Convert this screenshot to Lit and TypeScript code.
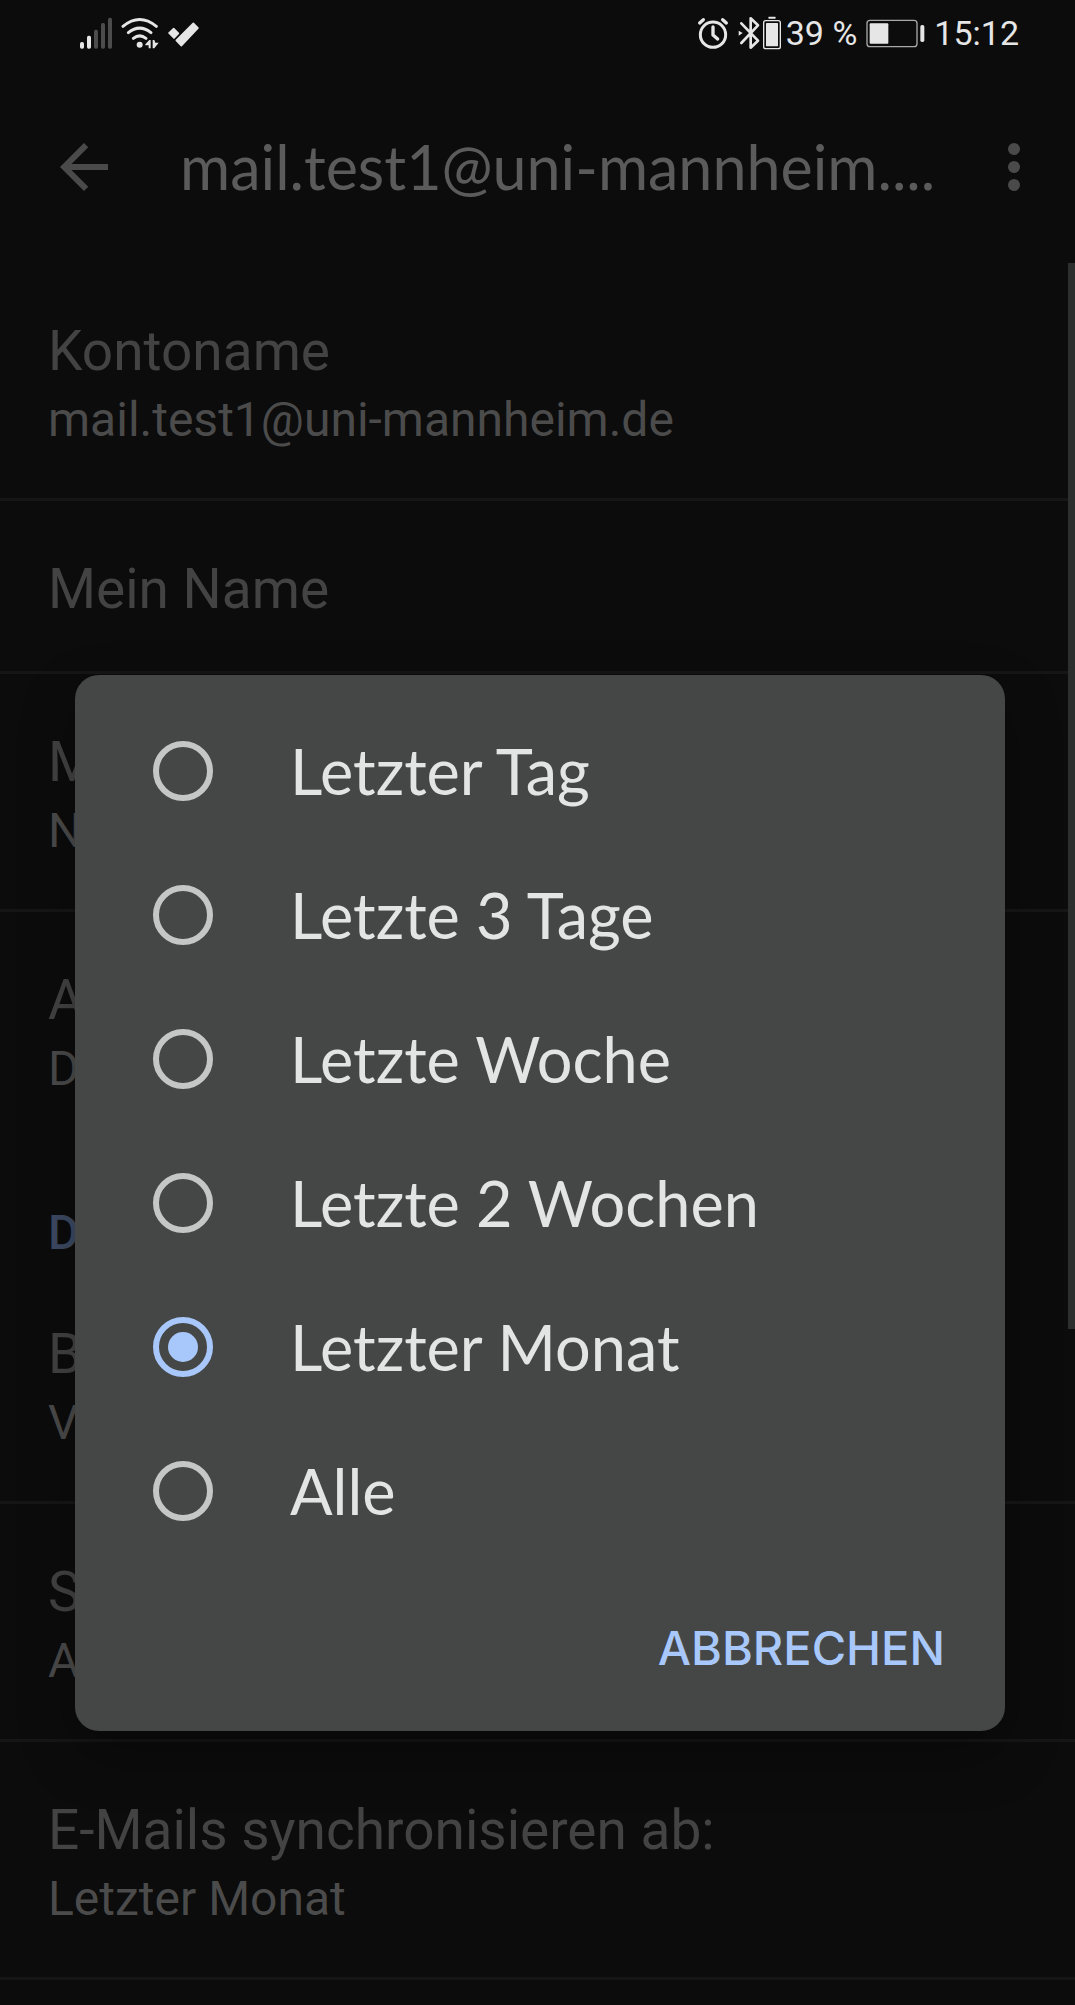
import { LitElement, html, css, svg, nothing } from "lit";
import { customElement, state } from "lit/decorators.js";

interface Row {
  kind: "row" | "heading";
  title: string;
  detail?: string;
  divider?: boolean;
}

const rows: Row[] = [
  { kind: "row", title: "Kontoname", detail: "mail.test1@uni-mannheim.de", divider: true },
  { kind: "row", title: "Mein Name", divider: true },
  { kind: "row", title: "M", detail: "N", divider: true },
  { kind: "row", title: "A", detail: "D" },
  { kind: "heading", title: "D" },
  { kind: "row", title: "B", detail: "V", divider: true },
  { kind: "row", title: "S", detail: "A", divider: true },
  { kind: "row", title: "E-Mails synchronisieren ab:", detail: "Letzter Monat", divider: true },
];

const periods = [
  "Letzter Tag",
  "Letzte 3 Tage",
  "Letzte Woche",
  "Letzte 2 Wochen",
  "Letzter Monat",
  "Alle",
];

@customElement("status-bar")
export class StatusBar extends LitElement {
  static styles = css`
    :host {
      display: flex;
      align-items: center;
      justify-content: space-between;
      height: 66px;
      padding: 0 56px 0 80px;
      color: #e6e6e6;
      font-size: 34px;
      line-height: 40px;
    }
    .group {
      display: flex;
      align-items: center;
      gap: 9px;
    }
    .level {
      display: flex;
      align-items: center;
      gap: 5px;
    }
    .tight {
      display: flex;
      align-items: center;
      gap: 2px;
    }
    svg {
      display: block;
      height: 34px;
    }
  `;

  render() {
    return html`
      <div class="group">
        <svg width="32" viewBox="60 48 96 102" fill="#e6e6e6" aria-hidden="true">
          <rect x="60" y="126" width="12" height="20" rx="5" />
          <rect x="81" y="107" width="12" height="39" rx="5" />
          <g fill="#4c4c4c">
            <rect x="102" y="89" width="12" height="57" rx="5" />
            <rect x="123" y="69" width="12" height="77" rx="5" />
            <rect x="144" y="53" width="12" height="93" rx="5" />
          </g>
        </svg>
        <svg width="38" viewBox="183 48 114 102" fill="none" stroke="#e6e6e6" aria-hidden="true">
          <g stroke-width="9" stroke-linecap="round">
            <path d="M189 79Q239 38 289 79" />
            <path d="M205 98Q239 71 273 98" />
            <path d="M220 115Q239 100 258 115" />
          </g>
          <circle cx="239" cy="134" r="9" fill="#e6e6e6" stroke="none" />
          <path fill="#e6e6e6" stroke="none" d="M256 133l12-13h4v25h-6v-9h-10zM278 120h5l3 8h10l-13 17h-5z" />
        </svg>
        <svg width="32" viewBox="324 48 96 102" fill="#e6e6e6" aria-hidden="true">
          <path stroke="#e6e6e6" stroke-width="5" stroke-linejoin="round" d="M327 99l14-13 14 14-13 14z" />
          <path stroke="#e6e6e6" stroke-width="5" stroke-linejoin="round" d="M349 121l51-51 14 14-50 53z" />
        </svg>
      </div>
      <div class="group">
        <svg width="32" viewBox="51 48 96 102" fill="none" stroke="#e6e6e6" aria-hidden="true">
          <circle cx="99" cy="104" r="38" stroke-width="9" />
          <path stroke-width="10" d="M99 81v24l14 12" stroke-linecap="round" stroke-linejoin="round" />
          <path stroke-width="10" stroke-linecap="round" d="M59 69l11-10M139 69l-11-10" />
        </svg>
        <div class="level">
          <div class="tight">
            <svg width="23" viewBox="178 48 69 102" fill="none" stroke="#e6e6e6" aria-hidden="true">
              <path stroke-width="8" stroke-linejoin="round" stroke-linecap="round" d="M188 70l50 52-22 21V55l22 21-50 53" />
              <path fill="#e6e6e6" stroke="none" d="M180 92l12 7-12 8z" />
            </svg>
            <svg width="18" viewBox="251 48 54 102" aria-hidden="true">
              <rect x="253" y="62" width="50" height="84" rx="6" fill="none" stroke="#e6e6e6" stroke-width="4" />
              <rect x="260" y="69" width="36" height="70" rx="2" fill="#e6e6e6" />
              <rect x="267" y="50" width="22" height="6" rx="2" fill="#e6e6e6" />
            </svg>
          </div>
          <span>39 %</span>
        </div>
        <svg width="59" viewBox="560 48 177 102" aria-hidden="true">
          <rect x="563" y="61" width="150" height="79" rx="9" fill="none" stroke="#a9a9a9" stroke-width="4" />
          <rect x="571" y="70" width="56" height="61" rx="3" fill="#e6e6e6" />
          <rect x="723" y="75" width="12" height="51" rx="5" fill="#e6e6e6" />
        </svg>
        <span>15:12</span>
      </div>
    `;
  }
}

@customElement("app-root")
export class AppRoot extends LitElement {
  @state() private selected = "Letzter Monat";

  static styles = css`
    :host {
      position: relative;
      display: flex;
      flex-direction: column;
      min-height: 100vh;
      overflow: hidden;
      background: #0c0c0c;
      font-family: Roboto, "Liberation Sans", sans-serif;
      -webkit-font-smoothing: antialiased;
    }
    *,
    *::before {
      box-sizing: border-box;
    }
    .appbar {
      display: flex;
      align-items: center;
      padding: 65px 25px 60px 48px;
    }
    .icon-button {
      flex: none;
      width: 72px;
      height: 72px;
      padding: 0;
      border: 0;
      background: none;
      color: #4a4a4a;
    }
    .icon-button svg {
      display: block;
      width: 72px;
      height: 72px;
      fill: currentColor;
    }
    .heading {
      flex: 1;
      margin: 0 0 0 60px;
      overflow: hidden;
      white-space: nowrap;
      color: #5b5b5b;
      font-family: Lato, Roboto, sans-serif;
      font-size: 61px;
      font-weight: 400;
      line-height: 72px;
    }
    .settings {
      position: relative;
      flex: 1;
    }
    .row {
      padding: 56px 48px 50px;
    }
    .divided {
      border-bottom: 3px solid #161616;
    }
    .title {
      margin: 0;
      color: #434343;
      font-size: 55px;
      font-weight: 400;
      line-height: 64px;
    }
    .detail {
      margin: 8px 0 0;
      color: #4b4b4b;
      font-size: 48px;
      line-height: 57px;
    }
    .section {
      margin: 0;
      padding: 58px 48px 5px;
      color: #3d4a63;
      font-size: 48px;
      font-weight: 500;
      line-height: 56px;
    }
    .thumb {
      position: absolute;
      top: 0;
      right: 0;
      width: 7px;
      height: 1066px;
      background: #2d2e2e;
    }
    .overlay {
      position: absolute;
      inset: 0;
      display: flex;
      align-items: flex-start;
      padding: 675px 70px 0 75px;
    }
    .dialog {
      flex: 1;
      padding-top: 24px;
      border-radius: 24px;
      background: #454746;
      box-shadow: 0 24px 56px rgba(0, 0, 0, 0.3);
      font-family: Lato, Roboto, sans-serif;
    }
    .options {
      margin: 0;
      padding: 0;
      border: 0;
    }
    .option {
      display: flex;
      align-items: center;
      gap: 77px;
      height: 144px;
      padding: 0 78px;
      color: #e3e5e4;
      font-size: 63px;
      line-height: 72px;
    }
    .radio {
      appearance: none;
      flex: none;
      width: 60px;
      height: 60px;
      margin: 0;
      padding: 9px;
      border: 6px solid #c4c7c5;
      border-radius: 50%;
    }
    .radio:checked {
      border-color: #a8c7fa;
      background: #a8c7fa content-box;
    }
    .actions {
      display: flex;
      justify-content: flex-end;
      padding: 57px 60px 55px;
    }
    .cancel {
      padding: 0;
      border: 0;
      background: none;
      color: #a8c7fa;
      font-family: Inter, Roboto, sans-serif;
      font-size: 47px;
      font-weight: 500;
      line-height: 56px;
    }
  `;

  private renderRow(row: Row) {
    if (row.kind === "heading") {
      return html`<h2 class="section">${row.title}</h2>`;
    }
    return html`
      <section class="row ${row.divider ? "divided" : ""}">
        <h3 class="title">${row.title}</h3>
        ${row.detail ? html`<p class="detail">${row.detail}</p>` : nothing}
      </section>
    `;
  }

  render() {
    return html`
      <status-bar></status-bar>
      <header class="appbar">
        <button class="icon-button" type="button" aria-label="Zurück">
          <svg viewBox="0 0 24 24">
            ${svg`<path d="M20 11H7.83l5.59-5.59L12 4l-8 8 8 8 1.41-1.41L7.83 13H20v-2z" />`}
          </svg>
        </button>
        <h1 class="heading">mail.test1@uni-mannheim....</h1>
        <button class="icon-button" type="button" aria-label="Weitere Optionen">
          <svg viewBox="0 0 24 24">
            <circle cx="12" cy="6" r="2" />
            <circle cx="12" cy="12" r="2" />
            <circle cx="12" cy="18" r="2" />
          </svg>
        </button>
      </header>
      <main class="settings">
        ${rows.map((row) => this.renderRow(row))}
        <div class="thumb"></div>
      </main>
      <div class="overlay">
        <div class="dialog" role="dialog" aria-modal="true">
          <fieldset class="options">
            ${periods.map(
              (period) => html`
                <label class="option">
                  <input
                    class="radio"
                    type="radio"
                    name="period"
                    .checked=${period === this.selected}
                    @change=${() => (this.selected = period)}
                  />
                  <span>${period}</span>
                </label>
              `
            )}
          </fieldset>
          <div class="actions">
            <button class="cancel" type="button">ABBRECHEN</button>
          </div>
        </div>
      </div>
    `;
  }
}
